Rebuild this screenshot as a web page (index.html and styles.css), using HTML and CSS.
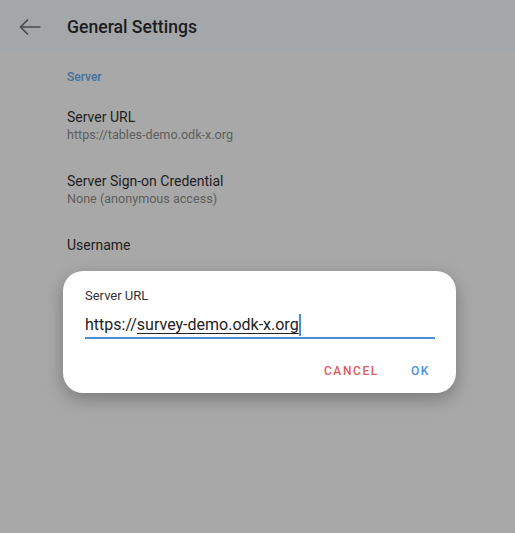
FILE: index.html
```html
<!DOCTYPE html>
<html>
<head>
<meta charset="utf-8">
<link rel="stylesheet" href="styles.css">
</head>
<body>
<div class="screen">
  <header class="toolbar">
    <svg class="back" width="24" height="24" viewBox="0 0 24 24"><path d="M22.5 12H2.5M10 4.5L2.5 12l7.5 7.5" fill="none" stroke="#4a4c4e" stroke-width="1.7"/></svg>
    <h1 class="title">General Settings</h1>
  </header>
  <main class="list">
    <div class="category">Server</div>
    <div class="item">
      <div class="item-title">Server URL</div>
      <div class="item-sub">https://tables-demo.odk-x.org</div>
    </div>
    <div class="item">
      <div class="item-title">Server Sign-on Credential</div>
      <div class="item-sub">None (anonymous access)</div>
    </div>
    <div class="item">
      <div class="item-title">Username</div>
    </div>
  </main>
  <div class="dialog">
    <div class="dialog-title">Server URL</div>
    <div class="input"><span class="plain">https://</span><span class="composing">survey-demo.odk-x.org</span><span class="cursor"></span></div>
    <div class="actions">
      <span class="btn cancel">CANCEL</span>
      <span class="btn ok">OK</span>
    </div>
  </div>
</div>
</body>
</html>
```

FILE: styles.css
```css
html, body {
  margin: 0;
  padding: 0;
}
body {
  font-family: Roboto, "Noto Sans", sans-serif;
  background: #a8a8a8;
  width: 515px;
  height: 533px;
  overflow: hidden;
}
.screen {
  position: relative;
  width: 515px;
  height: 533px;
  background: #a8a8a8;
}
.toolbar {
  height: 52px;
  background: #a3a7aa;
  display: flex;
  align-items: center;
  padding-top: 2px;
  box-sizing: border-box;
}
.back {
  margin-left: 18px;
  margin-right: 25px;
}
.title {
  margin: 0;
  font-size: 17.6px;
  font-weight: 500;
  color: #1c1c1c;
  line-height: 24px;
}
.list {
  padding-left: 67px;
}
.category {
  padding-top: 17px;
  line-height: 16px;
  font-size: 12px;
  font-weight: 500;
  color: #43709f;
  margin-bottom: 8px;
}
.item {
  padding: 14px 0 14px;
}
.item-title {
  font-size: 14px;
  line-height: 20px;
  color: #1e1e1e;
}
.item-sub {
  font-size: 12.6px;
  line-height: 16px;
  color: #5e5e5e;
}
.dialog {
  position: absolute;
  top: 271px;
  left: 63px;
  width: 393px;
  height: 122px;
  box-sizing: border-box;
  background: #ffffff;
  border-radius: 20px;
  box-shadow: 0 6px 18px rgba(0,0,0,0.28);
  padding: 17px 21px 0 22px;
}
.dialog-title {
  font-size: 13px;
  line-height: 16px;
  color: #333333;
}
.input {
  margin-top: 9px;
  font-size: 16px;
  line-height: 24px;
  color: #222222;
  border-bottom: 2px solid #4a8ed8;
  display: flex;
  align-items: center;
}
.composing {
  text-decoration: underline;
  text-decoration-thickness: 1px;
  text-underline-offset: 3px;
}
.cursor {
  width: 2px;
  height: 22px;
  background: #4a8ed8;
}
.actions {
  margin-top: 24px;
  display: flex;
  justify-content: flex-end;
  padding-right: 5px;
  gap: 32px;
}
.btn {
  font-size: 12px;
  line-height: 16px;
  font-weight: 500;
  letter-spacing: 1.6px;
}
.cancel {
  color: #e25b5b;
}
.ok {
  color: #4a8ed8;
}
```
